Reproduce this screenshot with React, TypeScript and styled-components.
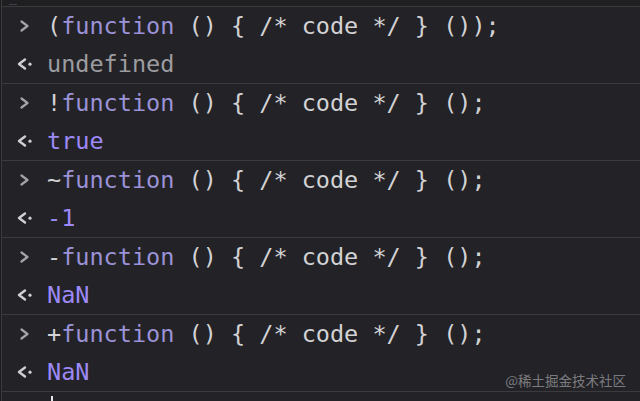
import React from "react";
import styled, { createGlobalStyle } from "styled-components";

const Global = createGlobalStyle`
  html, body { margin: 0; padding: 0; background: #1d1d20; }
  body { width: 640px; height: 401px; overflow: hidden; }
`;

const Console = styled.div`
  position: relative;
  width: 638px;
  height: 401px;
  margin-left: 1px;
  border-left: 1px solid #3b3b3f;
  background: #232327;
  display: flex;
  flex-direction: column;
  overflow: hidden;
  font-family: "DejaVu Sans Mono", "Liberation Mono", monospace;
  font-size: 23.5px;
  color: #d2d2d4;
`;

const TopStrip = styled.div`
  height: 6px;
  flex: none;
  background: #1f1f22;
  border-bottom: 1px solid #3b3b3f;
  display: flex;
  align-items: flex-end;
`;

const Mark = styled.div`
  width: 8px;
  height: 1px;
  margin-left: 7px;
  margin-bottom: 1px;
  background: #3e3e48;
`;

const Block = styled.div`
  flex: none;
  display: flex;
  flex-direction: column;
  border-bottom: 1px solid #3b3b3f;
`;

const Line = styled.div`
  height: 38px;
  display: flex;
  align-items: center;
  white-space: pre;
`;

const Gutter = styled.div`
  width: 45px;
  flex: none;
  display: flex;
  align-items: center;
  padding-left: 15px;
  box-sizing: border-box;
`;

const Kw = styled.span`
  color: #9b92d8;
`;

const Result = styled.span<{ $kind: "undef" | "value" }>`
  color: ${(p) => (p.$kind === "undef" ? "#9c9ca0" : "#9d89f7")};
`;

const CursorLine = styled.div`
  flex: 1;
  padding-left: 49px;
  padding-top: 4px;
`;

const Caret = styled.div`
  width: 2px;
  height: 12px;
  background: #e8e8e8;
`;

const Watermark = styled.div`
  position: absolute;
  right: 14px;
  top: 370px;
  font-family: "Noto Sans CJK SC", "Noto Sans", sans-serif;
  font-size: 13.5px;
  color: rgba(200, 200, 205, 0.55);
`;

const InPrompt = () => (
  <svg width="14" height="14" viewBox="0 0 14 14">
    <path d="M4.5 2.5 L10.5 7 L4.5 11.5" fill="none" stroke="#a3a3a8" strokeWidth="2.2" strokeLinejoin="round" strokeLinecap="round" />
  </svg>
);

const OutPrompt = () => (
  <svg width="16" height="14" viewBox="0 0 16 14">
    <path d="M8 2.5 L2 7 L8 11.5" fill="none" stroke="#d0d0d4" strokeWidth="2.4" strokeLinejoin="round" strokeLinecap="round" />
    <circle cx="13" cy="7.2" r="1.6" fill="#d0d0d4" />
  </svg>
);

type Entry = { pre: string; post: string; result: string; kind: "undef" | "value" };

const entries: Entry[] = [
  { pre: "(", post: " () { /* code */ } ());", result: "undefined", kind: "undef" },
  { pre: "!", post: " () { /* code */ } ();", result: "true", kind: "value" },
  { pre: "~", post: " () { /* code */ } ();", result: "-1", kind: "value" },
  { pre: "-", post: " () { /* code */ } ();", result: "NaN", kind: "value" },
  { pre: "+", post: " () { /* code */ } ();", result: "NaN", kind: "value" },
];

export default function App() {
  return (
    <>
      <Global />
      <Console>
        <TopStrip>
          <Mark />
        </TopStrip>
        {entries.map((e, i) => (
          <Block key={i}>
            <Line>
              <Gutter>
                <InPrompt />
              </Gutter>
              <span>
                {e.pre}
                <Kw>function</Kw>
                {e.post}
              </span>
            </Line>
            <Line>
              <Gutter>
                <OutPrompt />
              </Gutter>
              <Result $kind={e.kind}>{e.result}</Result>
            </Line>
          </Block>
        ))}
        <CursorLine>
          <Caret />
        </CursorLine>
        <Watermark>@稀土掘金技术社区</Watermark>
      </Console>
    </>
  );
}
